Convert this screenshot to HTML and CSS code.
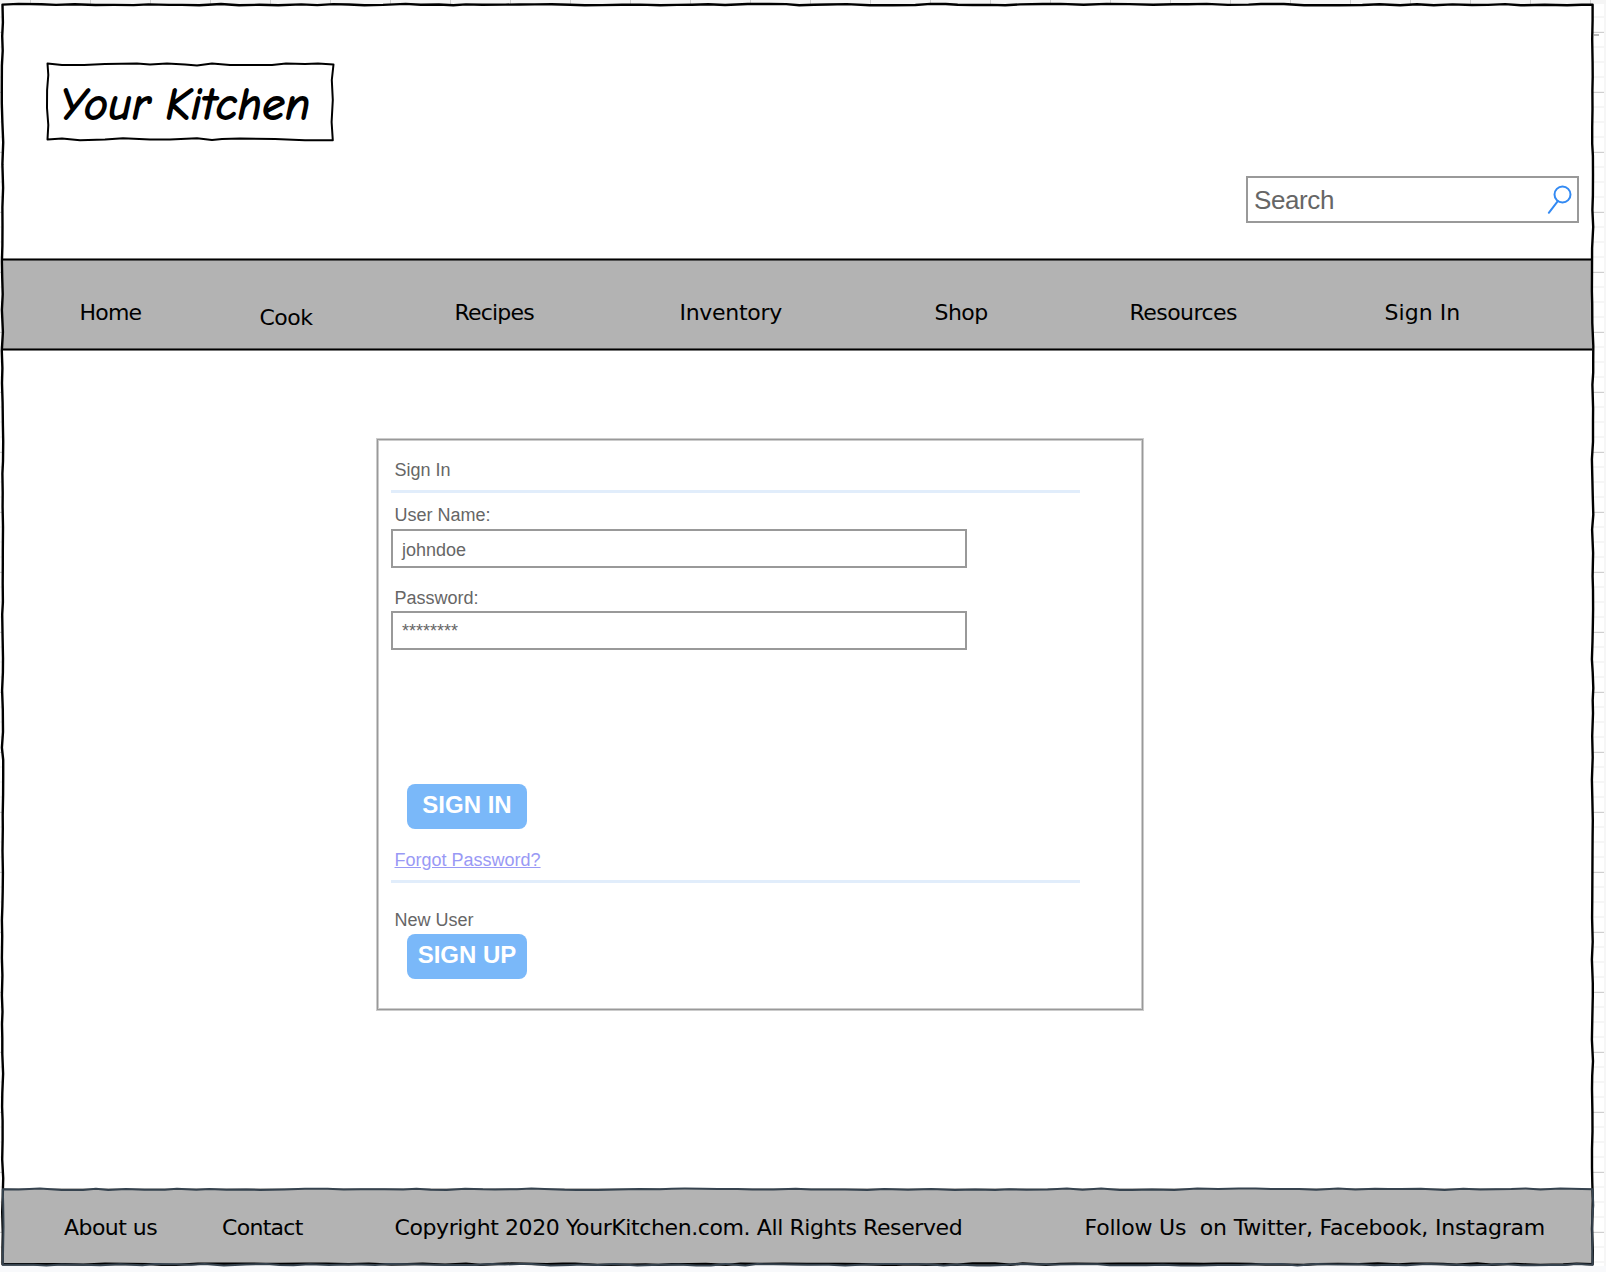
FILE: index.html
```html
<!DOCTYPE html>
<html lang="en">
<head>
<meta charset="utf-8">
<title>Your Kitchen - Sign In</title>
<link rel="stylesheet" href="styles.css">
</head>
<body>
<div class="page">
  <header class="header">
    <div class="logo">
      <svg class="logo-outline" width="292" height="82" viewBox="45 61 292 82" aria-hidden="true"><path d="M47.5 63.5L62 65H84L105 64 137 63.5 150 64.5 167 63.5 185 64.5 197 65.5 212 63.5 230 65H272L286 63.5 305 64 318 63.5 333.5 64.5 331.8 80 332.8 100 331.6 122 332.8 140.2 305 140.3 275 139 240 138.5 222 139 212 140 197 138.3 170 139.5H150L123 138.3 105 139.5 80 140.3 62 138.5 47.5 139.5 48.3 125 47 108 47.1 90 48.3 75Z"/></svg>
      <span class="logo-text">Your Kitchen</span>
    </div>
    <div class="search">
      <span class="placeholder">Search</span>
      <svg width="26" height="30" viewBox="0 0 26 30" aria-hidden="true"><circle cx="15.5" cy="9.5" r="8"/><path d="M10.8 16.2L1.8 27.8"/></svg>
    </div>
  </header>
  <nav class="nav">
    <a class="tight">Home</a><a class="lower">Cook</a><a class="tight">Recipes</a><a class="loose">Inventory</a><a>Shop</a><a>Resources</a><a class="wide">Sign In</a>
  </nav>
  <main class="main">
    <section class="panel">
      <h1 class="label title">Sign In</h1>
      <hr class="rule">
      <p class="label user">User Name:</p>
      <div class="field">johndoe</div>
      <p class="label pass">Password:</p>
      <div class="field stars">********</div>
      <div class="button signin">SIGN IN</div>
      <a class="label forgot">Forgot Password?</a>
      <hr class="rule">
      <p class="label new">New User</p>
      <div class="button">SIGN UP</div>
    </section>
  </main>
  <footer class="footer">
    <a>About us</a><a class="contact">Contact</a><span class="copy">Copyright 2020 YourKitchen.com. All Rights Reserved</span><span class="follow">Follow Us&nbsp; on Twitter, Facebook, Instagram</span>
  </footer>
</div>
<svg class="sketch" width="1606" height="1272" aria-hidden="true">
  <path id="frame" class="frame"/>
  <path id="foot" class="foot"/>
</svg>
<script src="sketch.js"></script>
</body>
</html>
```
FILE: styles.css
```css
* { box-sizing: border-box; }
body {
  margin: 0;
  width: 1606px;
  height: 1272px;
  overflow: hidden;
  position: relative;
  padding: 4px 0 0 3px;
  font-family: Helvetica, "Liberation Sans", Arial, sans-serif;
  background:
    linear-gradient(#f8f9fb, #f8f9fb) 0 1266px / 1606px 6px no-repeat,
    repeating-linear-gradient(90deg, #cfcfcf 0 1px, transparent 1px 60px) 30px 0 / 1606px 4px no-repeat,
    linear-gradient(#f5f5f5, #f5f5f5) 0 0 / 1606px 4px no-repeat,
    linear-gradient(#f6f6f6, #f6f6f6) 1604px 0 / 2px 1266px no-repeat,
    linear-gradient(90deg, #bbb 5px, transparent 5px 10px, #bbb 10px) 1594px 34px / 12px 2px no-repeat,
    repeating-linear-gradient(#cfcfcf 0 1px, transparent 1px 60px) 0 32px / 1606px 1240px no-repeat,
    repeating-linear-gradient(#f6f6f6 0 2px, transparent 2px 15px) 0 1px / 1606px 1270px no-repeat,
    #fff;
}
.page { width: 1589px; height: 1261px; display: flex; flex-direction: column; background: #fff; }
.header { height: 254px; display: flex; justify-content: space-between; padding: 57px 13px 0 42px; }
.logo { position: relative; width: 292px; height: 82px; padding: 14px 0 0 15px; }
.logo-outline { position: absolute; left: 0; top: 0; fill: none; stroke: #000; stroke-width: 2; stroke-linejoin: round; }
.logo-text {
  position: relative;
  display: block;
  font: italic 500 44px/60px "Comic Sans MS", "Comic Neue", Lato, sans-serif;
  letter-spacing: .8px;
  -webkit-text-stroke: 1.8px #000;
  white-space: nowrap;
}
.search {
  width: 333px; height: 47px; margin-top: 115px; padding: 0 4px 0 6px;
  border: 2px solid #999; color: #666;
  display: flex; align-items: center; justify-content: space-between;
  font-size: 26px; letter-spacing: -.4px;
}
.placeholder { padding-top: 2px; }
.search svg { fill: none; stroke: #338af3; stroke-width: 2; stroke-linecap: round; }
.nav {
  height: 93px; flex: none; padding: 41px 0 0 76.5px;
  display: grid; grid-template-columns: 180px 195px 225px 255px 195px 255px 1fr;
  background:
    linear-gradient(#777 1px, #000 1px 2px, #555 2px) top / 100% 3px no-repeat,
    linear-gradient(#555 1px, #000 1px 2px, #777 2px) bottom / 100% 3px no-repeat,
    #b3b3b3;
}
.nav, .footer { font-family: Verdana, "DejaVu Sans", sans-serif; font-size: 22px; line-height: 28px; letter-spacing: -.55px; color: #000; }
.nav .lower { padding-top: 5px; }
.nav .tight { letter-spacing: -.8px; }
.nav .loose { letter-spacing: -.3px; }
.nav .wide { letter-spacing: .05px; }
.main { flex: 1; padding: 88px 0 0 374px; }
.panel {
  width: 766px; height: 571px; padding: 20px 0 0 13px;
  border: 1px solid #999; box-shadow: 0 0 0 1px #ccc, inset 0 0 0 1px #ccc;
}
.label { display: block; margin: 0 0 0 3.5px; font-size: 18px; font-weight: 400; line-height: 20px; color: #666; }
.rule { width: 689px; height: 3px; margin: 0; border: 0; background: #e1edfb; }
.title { margin-bottom: 10px; }
.user { margin-top: 12px; }
.field { width: 576px; height: 39px; margin-top: 4px; padding: 9px 0 0 9px; border: 2px solid #999; font-size: 18px; line-height: 20px; color: #666; }
.pass { margin-top: 20px; }
.stars { margin-top: 3px; padding-top: 8px; }
.button {
  width: 120px; height: 45px; margin-left: 16px; border-radius: 8px;
  background: #7ab8f9; color: #fff; text-align: center;
  font-weight: 700; font-size: 24px; line-height: 42px;
}
.signin { margin-top: 134px; }
.forgot { margin-top: 21px; margin-bottom: 10px; color: #9999f5; text-decoration: underline; }
.new { margin-top: 27px; margin-bottom: 4px; }
.footer {
  height: 77px; flex: none; padding: 26px 0 0 61px;
  display: grid; grid-template-columns: 158px 172.5px 690px 1fr;
  background: #b3b3b3; white-space: nowrap;
}
.footer .contact { letter-spacing: -.7px; }
.footer .copy { letter-spacing: -.4px; }
.footer .follow { letter-spacing: -.2px; }
.sketch { position: absolute; left: 0; top: 0; fill: none; pointer-events: none; }
.frame { stroke: #000; stroke-width: 2.4; stroke-linejoin: round; }
.foot { stroke: #36434f; stroke-width: 2; stroke-linejoin: round; }
```
FILE: sketch.js
```js
// Hand-drawn outlines: each edge is split into short segments with a small offset.
let seed = 7;
function rand() {
  seed = (seed * 16807) % 2147483647;
  return seed / 2147483647;
}
function edge(x1, y1, x2, y2, amp) {
  const len = Math.hypot(x2 - x1, y2 - y1);
  const nx = -(y2 - y1) / len, ny = (x2 - x1) / len;
  let out = `L${x1} ${y1}`;
  for (let d = 16; d < len - 10; d += 12 + rand() * 12) {
    const o = (rand() * 2 - 1) * amp, t = d / len;
    out += `L${(x1 + (x2 - x1) * t + nx * o).toFixed(1)} ${(y1 + (y2 - y1) * t + ny * o).toFixed(1)}`;
  }
  return out;
}
function box(l, t, r, b, amp) {
  const d = edge(l, t, r, t, amp) + edge(r, t, r, b, amp) + edge(r, b, l, b, amp) + edge(l, b, l, t, amp);
  return 'M' + d.slice(1) + 'Z';
}
document.getElementById('frame').setAttribute('d', box(2.5, 4.6, 1592.6, 1264.2, 0.75));
document.getElementById('foot').setAttribute('d', box(2.8, 1189.3, 1592.6, 1264.7, 0.8));
```
